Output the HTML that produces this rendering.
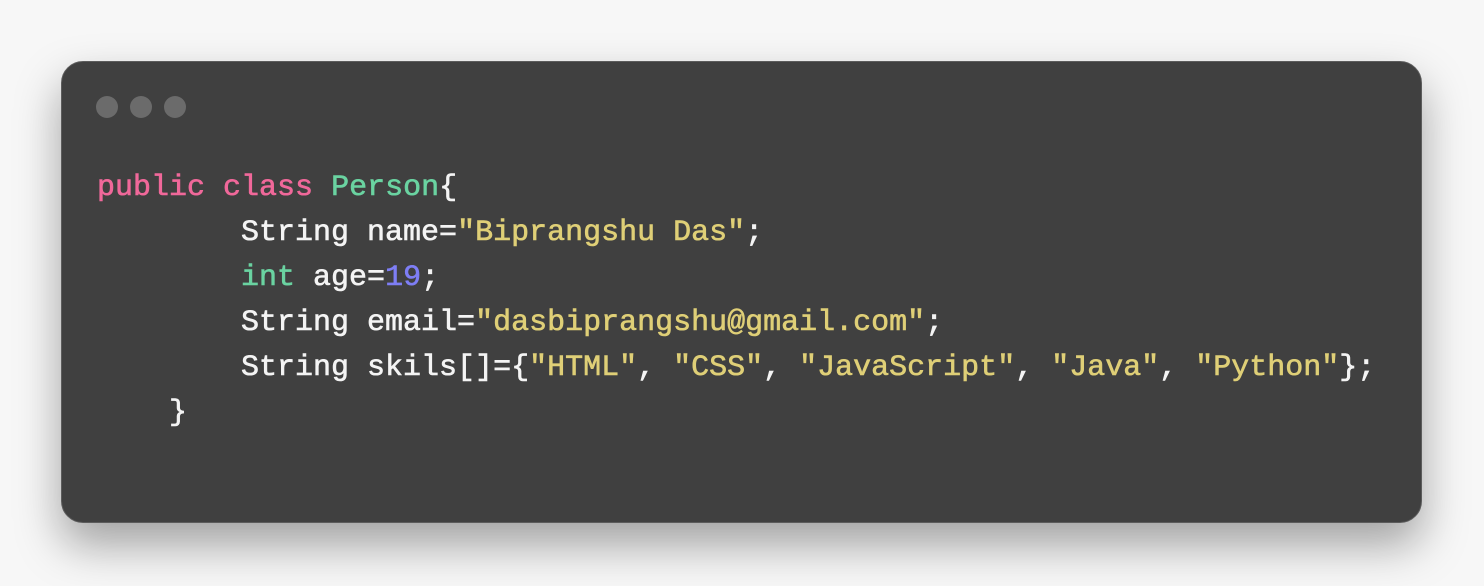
<!DOCTYPE html>
<html><head><meta charset="utf-8"><style>
html,body{margin:0;padding:0}
body{width:1484px;height:586px;background:#f7f7f7;position:relative;overflow:hidden}
.card{position:absolute;left:61px;top:61px;width:1359px;height:460px;background:#404040;border:1px solid #5c5c5c;border-radius:22px;box-shadow:0 22px 45px rgba(0,0,0,0.35)}
.dot{position:absolute;top:96px;width:22px;height:22px;border-radius:50%;background:#6b6b6b}
pre{position:absolute;left:97px;top:166px;margin:0;font-family:"Liberation Mono",monospace;font-size:30px;line-height:45px;font-weight:normal;-webkit-text-stroke:0.6px currentColor;color:#f4f4f4}
.k{color:#f0689a}.g{color:#6ad3a1}.s{color:#dfcf77}.n{color:#7e7ef5}
</style></head><body>
<div class="card"></div>
<div class="dot" style="left:96px"></div>
<div class="dot" style="left:130px"></div>
<div class="dot" style="left:164px"></div>
<pre><span class="k">public</span> <span class="k">class</span> <span class="g">Person</span>{
        String name=<span class="s">"Biprangshu Das"</span>;
        <span class="g">int</span> age=<span class="n">19</span>;
        String email=<span class="s">"dasbiprangshu@gmail.com"</span>;
        String skils[]={<span class="s">"HTML"</span>, <span class="s">"CSS"</span>, <span class="s">"JavaScript"</span>, <span class="s">"Java"</span>, <span class="s">"Python"</span>};
    }</pre>
</body></html>
